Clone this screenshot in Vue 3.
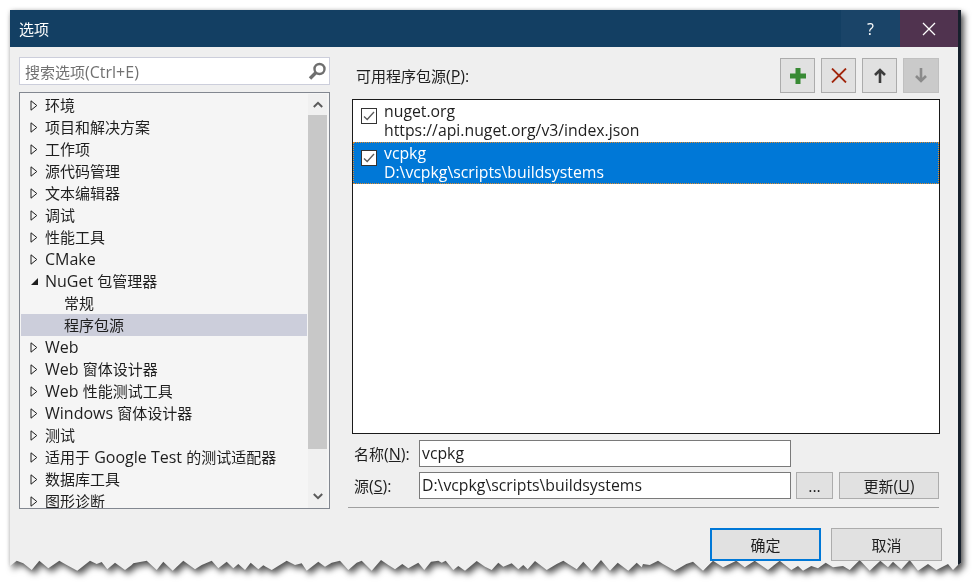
<script setup>
const treeItems = [
  { label: '环境', arrow: 'closed' },
  { label: '项目和解决方案', arrow: 'closed' },
  { label: '工作项', arrow: 'closed' },
  { label: '源代码管理', arrow: 'closed' },
  { label: '文本编辑器', arrow: 'closed' },
  { label: '调试', arrow: 'closed' },
  { label: '性能工具', arrow: 'closed' },
  { label: 'CMake', arrow: 'closed' },
  { label: 'NuGet 包管理器', arrow: 'open' },
  { label: '常规', child: true },
  { label: '程序包源', child: true, selected: true },
  { label: 'Web', arrow: 'closed' },
  { label: 'Web 窗体设计器', arrow: 'closed' },
  { label: 'Web 性能测试工具', arrow: 'closed' },
  { label: 'Windows 窗体设计器', arrow: 'closed' },
  { label: '测试', arrow: 'closed' },
  { label: '适用于 Google Test 的测试适配器', arrow: 'closed' },
  { label: '数据库工具', arrow: 'closed' },
  { label: '图形诊断', arrow: 'closed' }
]

const sources = [
  { name: 'nuget.org', url: 'https://api.nuget.org/v3/index.json' },
  { name: 'vcpkg', url: 'D:\\vcpkg\\scripts\\buildsystems', selected: true }
]

// Chinese is a little smaller than the latin text next to it
const splitRuns = (text) => {
  return text.match(/[\u4e00-\u9fff]+|[^\u4e00-\u9fff]+/g).map((part) => ({
    text: part,
    cjk: /[\u4e00-\u9fff]/.test(part)
  }))
}

// torn bottom edge, [x, y] read from 3x crops that start at the given x
const tornLeft = [[30, 48], [50, 32], [70, 40], [95, 60], [118, 32], [145, 55], [178, 32], [200, 45], [232, 62], [270, 32], [290, 42], [305, 36], [322, 58], [345, 38], [375, 60], [395, 45], [400, 40], [440, 32], [470, 60], [490, 35], [518, 62], [550, 32], [585, 58], [605, 45], [635, 32], [655, 55], [680, 35], [700, 55], [715, 42], [735, 60], [752, 38], [775, 58], [790, 46], [815, 60], [860, 32], [885, 45], [905, 40], [920, 62], [955, 35]]
const tornMiddle = [[0, 50], [20, 38], [45, 32], [70, 60], [95, 38], [110, 32], [140, 62], [168, 30], [190, 45], [210, 58], [232, 42], [250, 55], [280, 38], [298, 60], [318, 35], [340, 32], [350, 38], [362, 32], [385, 60], [400, 48], [420, 62], [455, 33], [480, 50], [500, 60], [520, 38], [535, 50], [560, 40], [580, 58], [595, 45], [608, 58], [630, 33], [665, 60], [695, 42], [715, 32], [730, 42], [755, 58], [775, 35], [800, 62], [828, 30], [855, 62], [878, 38], [910, 62], [935, 38], [950, 52]]
const tornRight = [[0, 42], [20, 45], [45, 32], [60, 42], [95, 62], [130, 42], [150, 35], [180, 62], [210, 32], [240, 52], [280, 32], [305, 52], [335, 32], [375, 60], [410, 32], [445, 60], [465, 48], [480, 62], [505, 48], [525, 55], [548, 38], [570, 52], [600, 48], [620, 60], [650, 30], [680, 62], [712, 32], [735, 52], [750, 35], [775, 58], [800, 30], [825, 62], [855, 42], [880, 60], [915, 42], [930, 60], [945, 45]]

const makeTornEdge = () => {
  const toPoints = (list, startX) => {
    return list.map(([x, y]) => [startX + x / 3 - 10, 540 + y / 3])
  }
  const edge = [...toPoints(tornLeft, 0), ...toPoints(tornMiddle, 325), ...toPoints(tornRight, 643)]
  const points = ['0 0', '951px 0', '951px 553px']
  edge.reverse().forEach(([x, y]) => {
    points.push(`${x.toFixed(1)}px ${y.toFixed(1)}px`)
  })
  return `polygon(${points.join(',')})`
}
const tornEdge = makeTornEdge()
</script>

<template>
  <div class="page">
    <div class="window-shadow">
      <div class="window" :style="{ clipPath: tornEdge }">
        <header class="titlebar">
          <span class="title cjk">选项</span>
          <div class="title-buttons">
            <span class="help">?</span>
            <span class="close">
              <svg width="14" height="14" viewBox="0 0 14 14">
                <path d="M1 1L13 13M13 1L1 13" stroke="#fff" stroke-width="1.3" fill="none" />
              </svg>
            </span>
          </div>
        </header>

        <div class="body">
          <aside class="left">
            <div class="search">
              <span class="search-text"><span class="cjk">搜索选项</span>(Ctrl+E)</span>
              <svg width="20" height="20" viewBox="0 0 20 20">
                <circle cx="13.5" cy="8" r="5" fill="none" stroke="#6f6f6f" stroke-width="2.4" />
                <path d="M10 11.5L4 17.5" stroke="#6f6f6f" stroke-width="3.4" />
              </svg>
            </div>
            <div class="tree">
              <ul class="tree-list">
                <li
                  v-for="item in treeItems"
                  :key="item.label"
                  class="tree-row"
                  :class="{ selected: item.selected, child: item.child }"
                >
                  <span class="tree-arrow">
                    <svg v-if="item.arrow === 'closed'" width="8" height="11" viewBox="0 0 8 11">
                      <path d="M1 .8L6.8 5.5L1 10.2Z" fill="none" stroke="#1e1e1e" stroke-width="1" />
                    </svg>
                    <svg v-else-if="item.arrow === 'open'" width="9" height="9" viewBox="0 0 9 9">
                      <path d="M8 1V8H1Z" fill="#1e1e1e" />
                    </svg>
                  </span>
                  <span class="tree-label">
                    <span
                      v-for="(run, index) in splitRuns(item.label)"
                      :key="index"
                      :class="{ cjk: run.cjk }"
                    >{{ run.text }}</span>
                  </span>
                </li>
              </ul>
              <div class="scrollbar">
                <span class="scroll-btn top">
                  <svg width="10" height="7" viewBox="0 0 10 7">
                    <path d="M.8 6L5 1.8L9.2 6" fill="none" stroke="#5a5a5a" stroke-width="2" />
                  </svg>
                </span>
                <div class="scroll-track"><div class="scroll-thumb"></div></div>
                <span class="scroll-btn bottom">
                  <svg width="10" height="7" viewBox="0 0 10 7">
                    <path d="M.8 1L5 5.2L9.2 1" fill="none" stroke="#5a5a5a" stroke-width="2" />
                  </svg>
                </span>
              </div>
            </div>
          </aside>

          <main class="right">
            <div class="toolbar">
              <span class="toolbar-label"><span class="cjk">可用程序包源</span>(<u>P</u>):</span>
              <div class="tool-buttons">
                <button class="tool-btn">
                  <svg width="16" height="16" viewBox="0 0 16 16">
                    <path d="M5.5 0H10.5V5.5H16V10.5H10.5V16H5.5V10.5H0V5.5H5.5Z" fill="#388a34" />
                  </svg>
                </button>
                <button class="tool-btn">
                  <svg width="16" height="15" viewBox="0 0 16 15">
                    <path d="M1 .5L15 14.5M15 .5L1 14.5" stroke="#a1260d" stroke-width="1.8" fill="none" />
                  </svg>
                </button>
                <button class="tool-btn">
                  <svg width="12" height="15" viewBox="0 0 12 15">
                    <path d="M6 15V2M1 7L6 2L11 7" fill="none" stroke="#3c3c3c" stroke-width="2.6" />
                  </svg>
                </button>
                <button class="tool-btn disabled">
                  <svg width="12" height="15" viewBox="0 0 12 15">
                    <path d="M6 0V13M1 8L6 13L11 8" fill="none" stroke="#8a8a8a" stroke-width="2.6" />
                  </svg>
                </button>
              </div>
            </div>

            <div class="source-list">
              <div
                v-for="source in sources"
                :key="source.name"
                class="source-row"
                :class="{ selected: source.selected }"
              >
                <span class="check">
                  <svg width="12" height="10" viewBox="0 0 12 10">
                    <path d="M1 5.5L4.2 8.5L11 1" fill="none" stroke="#5a5a5a" stroke-width="1.3" />
                  </svg>
                </span>
                <div class="source-text">
                  <div>{{ source.name }}</div>
                  <div>{{ source.url }}</div>
                </div>
              </div>
            </div>

            <div class="form">
              <div class="form-row">
                <label class="form-label"><span class="cjk">名称</span>(<u>N</u>):</label>
                <div class="input name-input">vcpkg</div>
              </div>
              <div class="form-row">
                <label class="form-label"><span class="cjk">源</span>(<u>S</u>):</label>
                <div class="input name-input">D:\vcpkg\scripts\buildsystems</div>
                <button class="small-btn dots">...</button>
                <button class="small-btn update"><span class="cjk">更新</span>(<u>U</u>)</button>
              </div>
            </div>
            <div class="divider"></div>
          </main>
        </div>

        <footer class="footer">
          <button class="action primary cjk">确定</button>
          <button class="action cjk">取消</button>
        </footer>
      </div>
    </div>
  </div>
</template>

<style>
html,
body {
  margin: 0;
  background: #fff;
}
</style>

<style scoped>
.page {
  width: 973px;
  height: 588px;
  box-sizing: border-box;
  padding: 10px 0 0 10px;
  overflow: hidden;
  font-family: "Open Sans", "Noto Sans CJK SC", sans-serif;
  font-size: 16px;
  color: #1e1e1e;
}
.cjk {
  font-size: 15px;
}
.window-shadow {
  width: 951px;
  filter: drop-shadow(0 0 2px rgba(0, 0, 0, 0.15)) drop-shadow(3px 4px 3px rgba(0, 0, 0, 0.65));
}
.window {
  width: 951px;
  height: 568px;
  box-sizing: border-box;
  border-right: 3px solid #16202c;
  background: #efefef;
  display: flex;
  flex-direction: column;
}
.titlebar {
  height: 37px;
  flex: none;
  background: #133f63;
  display: flex;
  align-items: center;
  justify-content: space-between;
  padding-left: 9px;
  color: #fff;
}
.title-buttons {
  display: flex;
  height: 100%;
}
.help,
.close {
  width: 59px;
  display: flex;
  align-items: center;
  justify-content: center;
}
.help {
  background: #1a4468;
  font-size: 16px;
}
.close {
  background: #50334f;
  width: 58px;
}
.body {
  display: flex;
  height: 469px;
  flex: none;
  padding: 10px 0 0 9px;
  box-sizing: border-box;
}
.left {
  width: 311px;
  flex: none;
  display: flex;
  flex-direction: column;
  gap: 7px;
}
.search {
  height: 28px;
  box-sizing: border-box;
  border: 1px solid #cccedb;
  background: #fff;
  display: flex;
  align-items: center;
  justify-content: space-between;
  padding: 0 3px 0 5px;
  color: #717171;
}
.search-text {
  margin-top: 1px;
}
.tree {
  height: 417px;
  box-sizing: border-box;
  border: 1px solid #828790;
  background: #f5f5f5;
  display: flex;
  padding: 1px 2px 0 1px;
  overflow: hidden;
}
.tree-list {
  list-style: none;
  margin: 0 1px 0 0;
  padding: 0;
  flex: 1;
  overflow: hidden;
}
.tree-row {
  height: 22px;
  display: flex;
  align-items: center;
  padding-left: 9px;
  white-space: nowrap;
}
.tree-row.child {
  padding-left: 28px;
}
.tree-row.selected {
  background: #cccedb;
}
.tree-arrow {
  width: 15px;
  flex: none;
  display: flex;
  align-items: center;
}
.tree-label {
  line-height: 20px;
  margin-top: -1px;
}
.scrollbar {
  width: 19px;
  flex: none;
  background: #f0f0f0;
  display: flex;
  flex-direction: column;
}
.scroll-btn {
  flex: none;
  display: flex;
  align-items: center;
  justify-content: center;
}
.scroll-btn.top {
  height: 21px;
}
.scroll-btn.bottom {
  height: 20px;
  padding-bottom: 2px;
}
.scroll-track {
  flex: 1;
}
.scroll-thumb {
  height: 334px;
  background: #c8c8c8;
}
.right {
  width: 588px;
  margin-left: 22px;
  flex: none;
  display: flex;
  flex-direction: column;
}
.toolbar {
  height: 35px;
  display: flex;
  align-items: center;
  justify-content: space-between;
  margin-top: 1px;
  padding-left: 4px;
  padding-right: 1px;
}
.tool-buttons {
  display: flex;
  gap: 6px;
}
button {
  font: inherit;
  color: inherit;
  padding: 0;
}
.tool-btn {
  width: 35px;
  height: 35px;
  box-sizing: border-box;
  border: 1px solid #acacac;
  background: #e1e1e1;
  display: flex;
  align-items: center;
  justify-content: center;
}
.tool-btn.disabled {
  width: 36px;
  background: #cacaca;
  border-color: #c0c0c0;
}
.source-list {
  height: 335px;
  margin-top: 6px;
  box-sizing: border-box;
  border: 1px solid #1a1a1a;
  background: #fff;
}
.source-row {
  height: 42px;
  box-sizing: border-box;
  display: flex;
  padding-left: 8px;
  font-size: 15.8px;
  line-height: 19px;
}
.source-text {
  padding-top: 2px;
}
.source-row.selected {
  background: #0078d7;
  color: #fff;
  outline: 1px dotted #e08a2a;
  outline-offset: -1px;
}
.check {
  width: 16px;
  height: 16px;
  margin-top: 8px;
  margin-right: 7px;
  box-sizing: border-box;
  border: 1px solid #333;
  background: #fff;
  display: flex;
  align-items: center;
  justify-content: center;
}
.form {
  margin-top: 6px;
  display: flex;
  flex-direction: column;
  gap: 5px;
}
.form-row {
  display: flex;
  align-items: center;
  height: 27px;
}
.form-label {
  width: 67px;
  flex: none;
  padding-left: 2px;
  box-sizing: border-box;
}
.input {
  height: 27px;
  box-sizing: border-box;
  border: 1px solid #7a7a7a;
  background: #fff;
  padding: 0 2px;
  font-size: 15.8px;
  line-height: 25px;
}
.name-input {
  width: 372px;
}
.small-btn {
  height: 27px;
  box-sizing: border-box;
  border: 1px solid #acacac;
  background: #e1e1e1;
}
.dots {
  width: 37px;
  margin-left: 5px;
}
.update {
  width: 100px;
  margin-left: 6px;
}
.divider {
  height: 1px;
  background: #a0a0a0;
  margin: 8px 1px 0 -4px;
}
.footer {
  height: 40px;
  display: flex;
  justify-content: flex-end;
  gap: 10px;
  padding: 12px 16px 0 0;
}
.action {
  width: 111px;
  height: 33px;
  box-sizing: border-box;
  border: 1px solid #acacac;
  background: #e1e1e1;
}
.action.primary {
  border: 2px solid #0078d7;
}
</style>
